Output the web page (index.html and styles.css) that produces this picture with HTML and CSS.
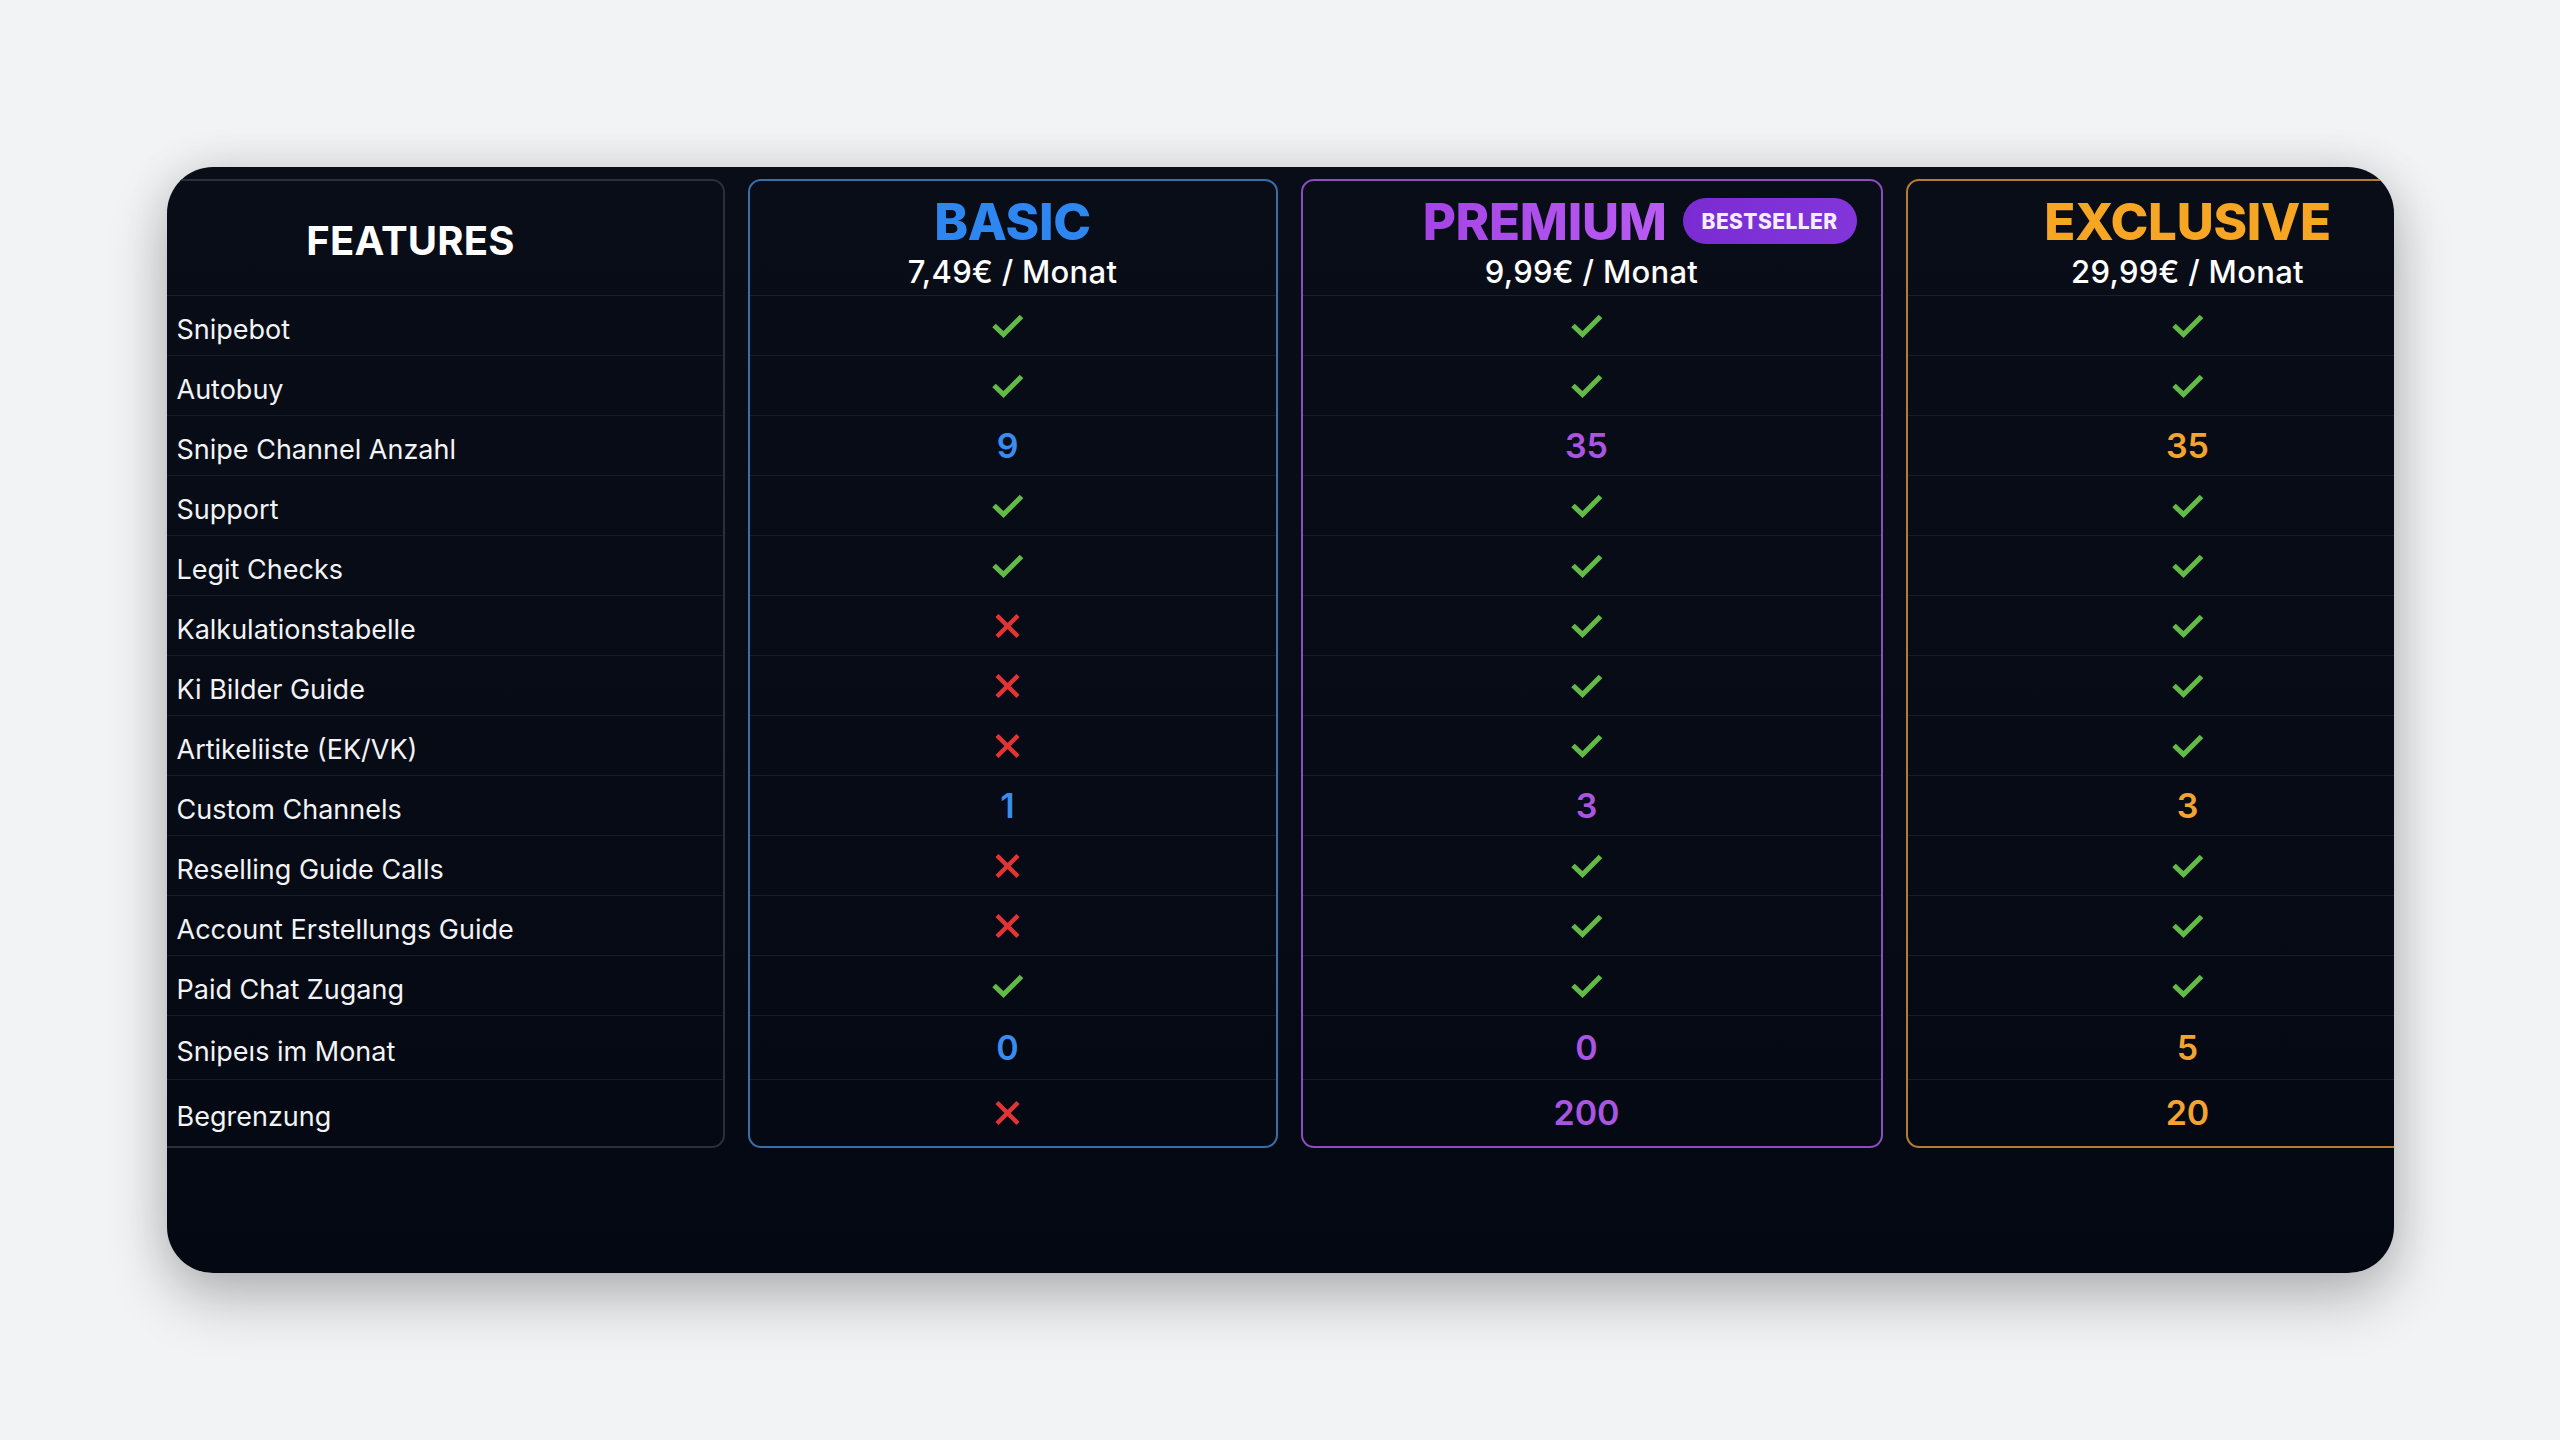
FILE: index.html
```html
<!DOCTYPE html>
<html lang="de">
<head>
<meta charset="utf-8">
<title>Preisvergleich</title>
<link rel="stylesheet" href="styles.css">
</head>
<body>
<svg width="0" height="0" class="defs" aria-hidden="true">
  <symbol id="ico-check" viewBox="0 0 33 24"><path d="M3 11.5 L12.5 20.5 L30.5 2.5" fill="none" stroke="currentColor" stroke-width="5"/></symbol>
  <symbol id="ico-x" viewBox="0 0 27 26"><path d="M3 2.5 L24 23.5 M24 2.5 L3 23.5" fill="none" stroke="currentColor" stroke-width="4.5"/></symbol>
</svg>
<main class="page">
  <section class="card">
    <div class="table">
      <div class="col col--features">
        <div class="col__head"><h2 class="features-title">FEATURES</h2></div>
        <div class="cell cell--label">Snipebot</div>
        <div class="cell cell--label">Autobuy</div>
        <div class="cell cell--label">Snipe Channel Anzahl</div>
        <div class="cell cell--label">Support</div>
        <div class="cell cell--label">Legit Checks</div>
        <div class="cell cell--label">Kalkulationstabelle</div>
        <div class="cell cell--label">Ki Bilder Guide</div>
        <div class="cell cell--label">Artikeliiste (EK/VK)</div>
        <div class="cell cell--label">Custom Channels</div>
        <div class="cell cell--label">Reselling Guide Calls</div>
        <div class="cell cell--label">Account Erstellungs Guide</div>
        <div class="cell cell--label">Paid Chat Zugang</div>
        <div class="cell cell--label">Snipeıs im Monat</div>
        <div class="cell cell--label">Begrenzung</div>
      </div>

      <div class="col col--basic">
        <div class="col__head">
          <div class="plan-title"><span class="plan-name">BASIC</span></div>
          <div class="price">7,49€ / Monat</div>
        </div>
        <div class="cell"><svg class="ico ico--check"><use href="#ico-check"/></svg></div>
        <div class="cell"><svg class="ico ico--check"><use href="#ico-check"/></svg></div>
        <div class="cell"><span class="num">9</span></div>
        <div class="cell"><svg class="ico ico--check"><use href="#ico-check"/></svg></div>
        <div class="cell"><svg class="ico ico--check"><use href="#ico-check"/></svg></div>
        <div class="cell"><svg class="ico ico--x"><use href="#ico-x"/></svg></div>
        <div class="cell"><svg class="ico ico--x"><use href="#ico-x"/></svg></div>
        <div class="cell"><svg class="ico ico--x"><use href="#ico-x"/></svg></div>
        <div class="cell"><span class="num">1</span></div>
        <div class="cell"><svg class="ico ico--x"><use href="#ico-x"/></svg></div>
        <div class="cell"><svg class="ico ico--x"><use href="#ico-x"/></svg></div>
        <div class="cell"><svg class="ico ico--check"><use href="#ico-check"/></svg></div>
        <div class="cell"><span class="num">0</span></div>
        <div class="cell"><svg class="ico ico--x"><use href="#ico-x"/></svg></div>
      </div>

      <div class="col col--premium">
        <div class="col__head">
          <div class="plan-title plan-title--badge"><span class="plan-name">PREMIUM</span><span class="badge">BESTSELLER</span></div>
          <div class="price">9,99€ / Monat</div>
        </div>
        <div class="cell"><svg class="ico ico--check"><use href="#ico-check"/></svg></div>
        <div class="cell"><svg class="ico ico--check"><use href="#ico-check"/></svg></div>
        <div class="cell"><span class="num">35</span></div>
        <div class="cell"><svg class="ico ico--check"><use href="#ico-check"/></svg></div>
        <div class="cell"><svg class="ico ico--check"><use href="#ico-check"/></svg></div>
        <div class="cell"><svg class="ico ico--check"><use href="#ico-check"/></svg></div>
        <div class="cell"><svg class="ico ico--check"><use href="#ico-check"/></svg></div>
        <div class="cell"><svg class="ico ico--check"><use href="#ico-check"/></svg></div>
        <div class="cell"><span class="num">3</span></div>
        <div class="cell"><svg class="ico ico--check"><use href="#ico-check"/></svg></div>
        <div class="cell"><svg class="ico ico--check"><use href="#ico-check"/></svg></div>
        <div class="cell"><svg class="ico ico--check"><use href="#ico-check"/></svg></div>
        <div class="cell"><span class="num">0</span></div>
        <div class="cell"><span class="num">200</span></div>
      </div>

      <div class="col col--exclusive">
        <div class="col__head">
          <div class="plan-title"><span class="plan-name">EXCLUSIVE</span></div>
          <div class="price">29,99€ / Monat</div>
        </div>
        <div class="cell"><svg class="ico ico--check"><use href="#ico-check"/></svg></div>
        <div class="cell"><svg class="ico ico--check"><use href="#ico-check"/></svg></div>
        <div class="cell"><span class="num">35</span></div>
        <div class="cell"><svg class="ico ico--check"><use href="#ico-check"/></svg></div>
        <div class="cell"><svg class="ico ico--check"><use href="#ico-check"/></svg></div>
        <div class="cell"><svg class="ico ico--check"><use href="#ico-check"/></svg></div>
        <div class="cell"><svg class="ico ico--check"><use href="#ico-check"/></svg></div>
        <div class="cell"><svg class="ico ico--check"><use href="#ico-check"/></svg></div>
        <div class="cell"><span class="num">3</span></div>
        <div class="cell"><svg class="ico ico--check"><use href="#ico-check"/></svg></div>
        <div class="cell"><svg class="ico ico--check"><use href="#ico-check"/></svg></div>
        <div class="cell"><svg class="ico ico--check"><use href="#ico-check"/></svg></div>
        <div class="cell"><span class="num">5</span></div>
        <div class="cell"><span class="num">20</span></div>
      </div>
    </div>
  </section>
</main>
</body>
</html>
```

FILE: styles.css
```css
* { box-sizing: border-box; }

html, body {
  margin: 0;
  padding: 0;
}

body {
  background: #f2f3f5;
  font-family: Inter, "Noto Sans", "Liberation Sans", sans-serif;
  color: #ffffff;
}

.defs {
  position: absolute;
  width: 0;
  height: 0;
  overflow: hidden;
}

.page {
  width: 2560px;
  height: 1440px;
  display: flex;
  align-items: center;
  justify-content: center;
}

.card {
  width: 2227px;
  height: 1106px;
  border-radius: 46px;
  background: linear-gradient(180deg, #090d18 0%, #070b15 60%, #040812 100%);
  overflow: hidden;
  padding-top: 12px;
  box-shadow: 0 26px 60px rgba(0, 0, 0, 0.24), 0 0 46px rgba(0, 0, 0, 0.10);
}

.table {
  display: flex;
  align-items: flex-start;
  gap: 23px;
  margin-left: -60px;
  width: 2371px;
}

.col {
  display: flex;
  flex-direction: column;
  border: 2px solid #2c303b;
  border-radius: 13px;
  flex: none;
}

.col--features { width: 618px; border-color: #2b2f39; }
.col--basic { width: 530px; border-color: #3b6ea9; }
.col--premium { width: 582px; border-color: #8d4cc0; }
.col--exclusive { width: 564px; border-color: #b57d30; }

.col__head {
  height: 115px;
  border-bottom: 1px solid #1b202b;
  display: flex;
  flex-direction: column;
  align-items: center;
  padding-top: 14px;
  gap: 9px;
}

.col--features .col__head {
  justify-content: center;
  padding-top: 6px;
  padding-right: 10px;
}

.features-title {
  margin: 0;
  font-size: 40px;
  font-weight: 700;
  line-height: 1;
  letter-spacing: 0.2px;
  color: #ffffff;
}

.plan-title {
  display: flex;
  align-items: center;
  justify-content: center;
  gap: 16px;
  width: 100%;
  height: 52px;
}

.plan-title--badge {
  justify-content: flex-end;
  padding-right: 24px;
}

.plan-name {
  font-size: 51px;
  font-weight: 800;
  line-height: 1;
  letter-spacing: -0.3px;
}

.col--basic .plan-name { color: #2e86f0; }
.col--premium .plan-name {
  color: #b04ff0;
  background: linear-gradient(90deg, #a444e6 0%, #b95cf2 100%);
  -webkit-background-clip: text;
  background-clip: text;
  -webkit-text-fill-color: transparent;
}
.col--exclusive .plan-name { color: #f6a623; }

.badge {
  display: inline-flex;
  align-items: center;
  height: 46px;
  padding: 0 19px;
  border-radius: 23px;
  background: linear-gradient(90deg, #7a2cd2 0%, #8236da 100%);
  color: #f4ecff;
  font-size: 21px;
  font-weight: 800;
  letter-spacing: 0.4px;
}

.price {
  font-size: 31px;
  font-weight: 500;
  line-height: 1;
  letter-spacing: 0.3px;
  color: #ffffff;
}

.cell {
  height: 60px;
  border-bottom: 1px solid #171c27;
  display: flex;
  align-items: center;
  justify-content: center;
  padding-right: 10px;
}

.col--exclusive .cell { padding-right: 0; }

.cell:nth-child(14) { height: 64px; }
.cell:last-child { height: 66px; border-bottom: none; }

.cell--label {
  justify-content: flex-start;
  padding: 7px 0 0 68px;
  font-size: 27px;
  font-weight: 400;
  color: #f2f3f5;
}

.ico { display: block; }
.ico--check { width: 33px; height: 24px; color: #62bb47; }
.ico--x { width: 27px; height: 26px; color: #e23434; }

.num {
  font-size: 34px;
  font-weight: 600;
  line-height: 1;
}

.col--basic .num { color: #3a8cf0; }
.col--premium .num { color: #aa55e2; }
.col--exclusive .num { color: #f3a330; }
```
